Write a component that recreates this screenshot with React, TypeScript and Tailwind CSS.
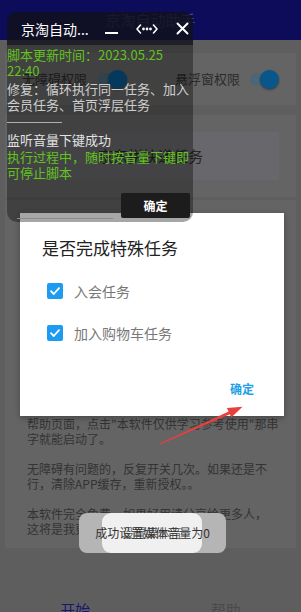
import React from 'react';

const Toggle: React.FC = () => (
  <div className="relative w-[29px] h-[19px]">
    <div className="absolute left-0 top-[3px] w-[26px] h-[13px] rounded-full bg-[#4c6676]" />
    <div className="absolute right-0 top-0 w-[19px] h-[19px] rounded-full bg-[#09578a] shadow-[0_1px_2px_rgba(0,0,0,0.4)]" />
  </div>
);

const CheckBox: React.FC = () => (
  <div className="w-[16px] h-[16px] rounded-[2px] bg-[#1d9bf0] flex items-center justify-center">
    <svg width="12" height="12" viewBox="0 0 12 12" fill="none">
      <path d="M2 6.2 L4.8 9 L10 3.2" stroke="white" strokeWidth="1.8" strokeLinecap="round" strokeLinejoin="round" />
    </svg>
  </div>
);

const helpLines = [
  '帮助页面，点击"本软件仅供学习参考使用"那串',
  '字就能启动了。',
  '',
  '无障碍有问题的，反复开关几次。如果还是不',
  '行，清除APP缓存，重新授权。。',
  '',
  '本软件完全免费，如果好用请分享给更多人，',
  '这将是我更新的最大动力。',
];

export default function App() {
  return (
    <div className="relative w-[301px] h-[612px] overflow-hidden bg-[#5e5e5e] font-['Noto_Sans_CJK_SC','Noto_Sans',sans-serif] flex flex-col">
      {/* app behind the overlays */}
      <div className="h-10 shrink-0 bg-[#0c0c5a] flex items-center justify-center text-[15px] text-[#44447a]">
        京淘自动助手
      </div>
      <div className="px-[5px] pt-[13px] flex flex-col">
        <div className="h-[52px] bg-[#646464] flex items-center pl-[17px] text-[13px] text-[#2b2b2b]">
          <span>无障碍权限</span>
          <div className="ml-[11px]"><Toggle /></div>
          <span className="ml-[48px]">悬浮窗权限</span>
          <div className="ml-[10px]"><Toggle /></div>
        </div>
        <div className="mt-[10px] h-[82px] bg-[#646464] flex items-center px-[17px]">
          <div className="w-full h-[48px] bg-[#67676c] flex items-center justify-center text-[15px] text-[#252525]">
            京东拼快递任务
          </div>
        </div>
        <div className="mt-[3px] h-[348px] bg-[#646464] pl-[22px] pt-[216px] text-[12px] leading-[15px] text-[#333333]">
          {helpLines.map((line, i) => (
            <div key={i} className="h-[15px] whitespace-nowrap">{line}</div>
          ))}
        </div>
      </div>
      <div className="mt-auto h-[64px] grid grid-cols-2 text-center text-[15px] leading-[18px] pt-[53px]">
        <span className="text-[#17176e]">开始</span>
        <span className="text-[#4a4a4a]">帮助</span>
      </div>

      {/* dialog */}
      <div className="absolute left-[20px] top-[213px] w-[264px] h-[203px] bg-white shadow-[0_2px_6px_rgba(0,0,0,0.3)] px-[22px] pt-[23px]">
        <div className="text-[17px] leading-[24px] text-[#222222]">是否完成特殊任务</div>
        <div className="mt-[19px] ml-[5px] h-[24px] flex items-center">
          <CheckBox />
          <span className="ml-[11px] text-[14px] text-[#777777]">入会任务</span>
        </div>
        <div className="mt-[18px] ml-[5px] h-[24px] flex items-center">
          <CheckBox />
          <span className="ml-[11px] text-[14px] text-[#777777]">加入购物车任务</span>
        </div>
        <div className="mt-[34px] flex justify-end pr-[8px] text-[12px] leading-[20px] font-bold text-[#1e9fe8]">
          确定
        </div>
      </div>

      {/* floating log window */}
      <div className="absolute left-[7px] top-[12px] w-[186px] h-[210px] rounded-[10px] overflow-hidden bg-black/35">
        <div className="h-[33px] bg-[rgba(20,20,30,0.72)] flex items-center pl-[14px] text-white">
          <span className="text-[14px] leading-[18px]">京淘自动...</span>
          <svg className="ml-[16px] mt-[10px]" width="13" height="3" viewBox="0 0 13 3">
            <rect x="0" y="0" width="13" height="2" fill="white" />
          </svg>
          <svg className="ml-[18px]" width="22" height="12" viewBox="0 0 22 12" fill="none" stroke="white" strokeWidth="1.6" strokeLinecap="round" strokeLinejoin="round">
            <path d="M4.5 2 L1 6 L4.5 10" />
            <path d="M17.5 2 L21 6 L17.5 10" />
            <circle cx="7.5" cy="6" r="0.6" fill="white" />
            <circle cx="11" cy="6" r="0.6" fill="white" />
            <circle cx="14.5" cy="6" r="0.6" fill="white" />
          </svg>
          <svg className="ml-[18px]" width="13" height="13" viewBox="0 0 13 13" fill="none" stroke="white" strokeWidth="2" strokeLinecap="round">
            <path d="M1.5 1.5 L11.5 11.5 M11.5 1.5 L1.5 11.5" />
          </svg>
        </div>
        <div className="pt-[2px] text-[13px] leading-[16px]">
          <div className="text-[#62c31e]">脚本更新时间：2023.05.25 22:40</div>
          <div className="mt-[2px] text-[#cfcfcf]">修复：循环执行同一任务、加入会员任务、首页浮层任务</div>
          <div className="mt-[9px] w-[55px] h-px bg-[#b0b0b0]" />
          <div className="mt-[9px] text-[#e2e2e2]">监听音量下键成功</div>
          <div className="mt-px text-[#62c31e]">执行过程中，随时按音量下键即可停止脚本</div>
        </div>
        <div className="mt-[12px] flex justify-end pr-[3px]">
          <div className="w-[69px] h-[25px] bg-[#1c1c1c] rounded-[2px] flex items-center justify-center text-[12px] font-bold text-white">
            确定
          </div>
        </div>
        <div className="absolute left-[10px] bottom-[3px] w-[96px] h-px bg-[#8a8a8a]" />
      </div>

      {/* toasts: two stacked, their texts show through each other */}
      <div className="absolute left-[79px] top-[513px] w-[147px] h-[40px] rounded-[8px] bg-[#b5b5b5]" />
      <div className="absolute left-[102px] top-[513px] w-[100px] h-[40px] rounded-[9px] bg-[#f0f0f0]" />
      <div className="absolute left-[79px] top-[513px] w-[147px] h-[40px] flex items-center justify-center text-[12px] text-[#333333]">
        成功设置媒体音量为0
      </div>
      <div className="absolute left-[102px] top-[513px] w-[100px] h-[40px] flex items-center justify-center text-[12px] text-[#333333]/80">
        设置媒体音
      </div>

      {/* red arrow */}
      <svg className="absolute inset-0 pointer-events-none" width="301" height="612" viewBox="0 0 301 612">
        <polygon
          points="160.2,444.5 229.8,414.2 231.3,417.6 242.5,406.8 226.9,408 228.6,411.4 159.8,443.5"
          fill="#e8403c"
        />
      </svg>
    </div>
  );
}
